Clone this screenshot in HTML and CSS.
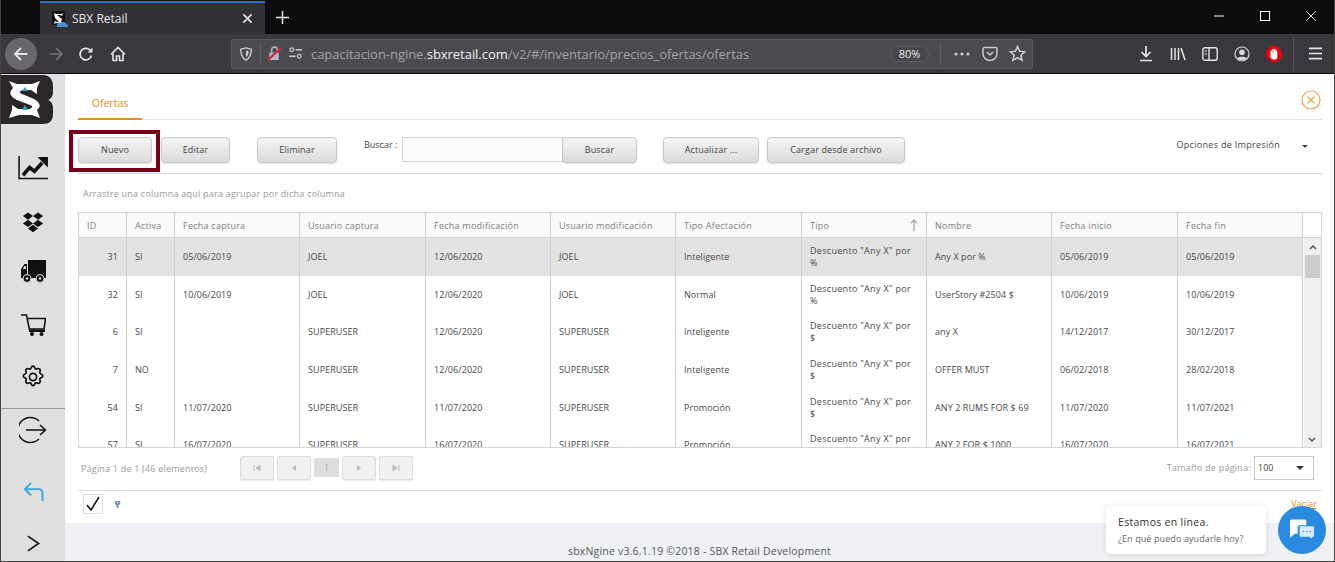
FILE: index.html
```html
<!DOCTYPE html>
<html lang="es">
<head>
<meta charset="utf-8">
<title>SBX Retail</title>
<link rel="stylesheet" href="styles.css">
</head>
<body>
<div class="window">
  <header class="tabbar">
    <div class="tab">
      <svg class="favicon" viewBox="0 0 16 16"><rect width="13" height="14" fill="#111"/><path d="M2 2l2 1h5l2-1-1 3-2-1H5l5 4-1 3 2 1H4l-2 1 1-3 2 1h2L3 7z" fill="#fff"/><path d="M5 14c0-2 2-3 4-2 2-2 5-1 5 1 1 0 2 1 2 3H5z" fill="#4a90d9"/></svg>
      <span class="tab-title">SBX Retail</span>
      <svg class="tab-close" viewBox="0 0 12 12"><path d="M1.500 1.500l9 9M10.500 1.500l-9 9" stroke="#eee" stroke-width="1.600"/></svg>
    </div>
    <svg class="newtab" viewBox="0 0 14 14"><path d="M7 0v14M0 7h14" stroke="#e8e8e8" stroke-width="1.600"/></svg>
    <div class="winctl">
      <svg viewBox="0 0 12 12"><path d="M1 6h10" stroke="#fff"/></svg>
      <svg viewBox="0 0 12 12"><rect x="1.500" y="1.500" width="9" height="9" fill="none" stroke="#fff"/></svg>
      <svg viewBox="0 0 12 12"><path d="M1 1l10 10M11 1L1 11" stroke="#fff" stroke-width=".9"/></svg>
    </div>
  </header>
  <nav class="toolbar">
    <div class="back"><svg viewBox="0 0 16 16"><path d="M14.500 8H2M8 2L2 8l6 6" fill="none" stroke="#e6e6e6" stroke-width="1.800"/></svg></div>
    <svg class="tb-icon forward" viewBox="0 0 16 16"><path d="M1.500 8H14M8 2l6 6-6 6" fill="none" stroke="#77777a" stroke-width="1.600"/></svg>
    <svg class="tb-icon reload" viewBox="0 0 16 16"><path d="M13.500 9.500A5.800 5.800 0 1 1 12 4l1.500 1.500" fill="none" stroke="#e6e6e6" stroke-width="1.700"/><path d="M14.500 1.500v5h-5z" fill="#e6e6e6"/></svg>
    <svg class="tb-icon home" viewBox="0 0 16 16"><path d="M1 8.500L8 1.500l7 7M3 7.500V14.500h3.500V10h3v4.500H13V7.500" fill="none" stroke="#e6e6e6" stroke-width="1.600"/></svg>
    <div class="urlbar">
      <svg class="u-shield" viewBox="0 0 16 16"><path d="M8 1l6 1.500c0 6-1.500 10-6 12.500-4.500-2.500-6-6.500-6-12.500z" fill="none" stroke="#cfcfcf" stroke-width="1.600"/><path d="M8 4l3 .8c0 3-.8 5.200-3 6.800z" fill="#cfcfcf"/></svg>
      <span class="u-sep"></span>
      <svg class="u-lock" viewBox="0 0 16 16"><rect x="2.500" y="7" width="10" height="8" fill="#bbb"/><path d="M5 7V4a3 3 0 0 1 6 0v3" fill="none" stroke="#bbb" stroke-width="1.600"/><path d="M1 15L15 2" stroke="#d3234a" stroke-width="2.200"/></svg>
      <svg class="u-perm" viewBox="0 0 16 14"><circle cx="4" cy="3" r="2" fill="none" stroke="#ccc" stroke-width="1.300"/><path d="M8 3h7M1 10h7" stroke="#ccc" stroke-width="1.500"/><circle cx="12" cy="10" r="2" fill="none" stroke="#ccc" stroke-width="1.300"/></svg>
      <span class="url"><span class="url-dim">capacitacion-ngine.</span><span class="url-host">sbxretail.com</span><span class="url-dim">/v2/#/inventario/precios_ofertas/ofertas</span></span>
      <span class="zoompill">80%</span>
      <span class="u-sep sep2"></span>
      <svg class="u-dots" viewBox="0 0 16 4"><circle cx="2" cy="2" r="1.600" fill="#ccc"/><circle cx="8" cy="2" r="1.600" fill="#ccc"/><circle cx="14" cy="2" r="1.600" fill="#ccc"/></svg>
      <svg class="u-pocket" viewBox="0 0 16 16"><path d="M1 3a1.500 1.500 0 0 1 1.500-1.500h11A1.500 1.500 0 0 1 15 3v4.500a7 7 0 0 1-14 0z" fill="none" stroke="#ccc" stroke-width="1.500"/><path d="M5 6l3 3 3-3" fill="none" stroke="#ccc" stroke-width="1.500"/></svg>
      <svg class="u-star" viewBox="0 0 16 16"><path d="M8 1.500l2 4.400 4.800.5-3.600 3.200 1 4.700L8 12l-4.200 2.300 1-4.700L1.200 6.400 6 5.900z" fill="none" stroke="#ccc" stroke-width="1.500"/></svg>
    </div>
    <svg class="tb-icon dl" viewBox="0 0 16 16"><path d="M8 0v10M3.500 6L8 10.500 12.500 6M2 14.500h12" fill="none" stroke="#e6e6e6" stroke-width="1.700"/></svg>
    <svg class="tb-icon lib" viewBox="0 0 16 16"><path d="M1.500 2v12M5 2v12M8.500 2v12M11 2l4 12" fill="none" stroke="#e6e6e6" stroke-width="1.500"/></svg>
    <svg class="tb-icon side" viewBox="0 0 16 14"><rect x=".8" y=".8" width="14.400" height="12.400" rx="2" fill="none" stroke="#e6e6e6" stroke-width="1.400"/><path d="M7 1v12" stroke="#e6e6e6" stroke-width="1.400"/><path d="M2.500 4H5M2.500 7H5" stroke="#e6e6e6"/></svg>
    <svg class="tb-icon acct" viewBox="0 0 16 16"><circle cx="8" cy="8" r="7" fill="none" stroke="#d8d8d8" stroke-width="1.200"/><circle cx="8" cy="6.200" r="2.800" fill="#d8d8d8"/><path d="M3 12.500c1-2.500 9-2.500 10 0-2 2-8 2-10 0z" fill="#d8d8d8"/></svg>
    <svg class="tb-icon stop" viewBox="0 0 16 16"><path d="M5 0h6l5 5v6l-5 5H5l-5-5V5z" fill="#e3000f"/><path d="M5.200 8V5M7 8V3.500M8.800 8V3.500M10.500 8V5" stroke="#fff" stroke-width="1.500" stroke-linecap="round"/><path d="M4.500 7.500h6.800V11c0 1.500-1 2.500-2.300 2.500H7.200c-.8 0-1.400-.4-1.800-1L3.500 9.800l.8-.6 1 1z" fill="#fff"/></svg>
    <span class="tb-sep"></span>
    <svg class="tb-icon menu" viewBox="0 0 14 14"><path d="M0 1.500h14M0 7h14M0 12.500h14" stroke="#e6e6e6" stroke-width="1.800"/></svg>
  </nav>
  <div class="app">
    <aside class="sidebar">
      <svg class="logo" viewBox="0 0 52 52"><path d="M0 1h42c7 0 10 5 10 11v6c0 4-2 7-5 8 3 1 5 4 5 8v6c0 7-4 10-10 10H0z" fill="#2a2726"/><path d="M8 7l8 3h15l8-3-3 7v6l-6-4H21c-3 2-3 3 0 4l12 5c7 4 7 8 3 11l3 8-8-3H18L8 44l3-8v-5l6 4h12c3-2 3-3 0-4L16 26c-8-4-8-8-4-12z" fill="#fff"/><path d="M24 13l3 4h-6zM24 31l3 5h-6z" fill="#35a5dc"/></svg>
      <svg class="s-icon s-chart" viewBox="0 0 32 26"><path d="M1 1v23.500h30" fill="none" stroke="#111" stroke-width="1.600"/><path d="M5 21l7-8 5 4 8-9" fill="none" stroke="#111" stroke-width="3.800"/><path d="M20 2h11v11z" fill="#111"/></svg>
      <svg class="s-icon s-box" viewBox="0 0 24 22"><path d="M6.500 0L12 4 6.500 8 1 4zM17.500 0L23 4l-5.500 4L12 4zM6.500 8L12 12l-5.500 4L1 12zM17.500 8L23 12l-5.500 4L12 12zM6.500 17.500L12 13.500l5.500 4L12 21.500z" fill="#111"/></svg>
      <svg class="s-icon s-truck" viewBox="0 0 25 23"><path d="M7 0h18v18H7z" fill="#111"/><path d="M6 4H3.500L0 9v9h6zM3.500 6H5v3H1.800z" fill="#111" fill-rule="evenodd"/><circle cx="6" cy="18.500" r="4" fill="#111" stroke="#e0e0de"/><circle cx="6" cy="18.500" r="1.200" fill="#e0e0de"/><circle cx="19" cy="18.500" r="4" fill="#111" stroke="#e0e0de"/><circle cx="19" cy="18.500" r="1.200" fill="#e0e0de"/></svg>
      <svg class="s-icon s-cart" viewBox="0 0 25 22"><path d="M0 1h5.500l3 15M6 4.500h18.500L23 15H8.500" fill="none" stroke="#111" stroke-width="1.600"/><path d="M8 15.500h16v2.500H8z" fill="#111"/><circle cx="11" cy="20" r="2" fill="#111"/><circle cx="20.500" cy="20" r="2" fill="#111"/></svg>
      <svg class="s-icon s-gear" viewBox="0 0 24 24"><path d="M12 1.200c1 0 1.500.5 1.800 1.500.3 1.200 1.300 1.700 2.400 1.100 1-.5 1.800-.4 2.500.3.700.7.800 1.500.3 2.400-.6 1.100-.1 2.100 1.100 2.500 1 .3 1.600.9 1.600 1.900s-.6 1.600-1.600 1.900c-1.200.4-1.700 1.400-1.100 2.500.5.900.4 1.700-.3 2.400-.7.700-1.500.8-2.500.3-1.100-.6-2.100-.1-2.400 1.100-.3 1-.8 1.600-1.800 1.600s-1.500-.6-1.800-1.600c-.3-1.200-1.300-1.700-2.400-1.100-1 .5-1.800.4-2.500-.3-.7-.7-.8-1.500-.3-2.400.6-1.100.1-2.100-1.100-2.500-1-.3-1.600-.9-1.600-1.900s.6-1.600 1.600-1.900c1.200-.4 1.700-1.400 1.100-2.500-.5-.9-.4-1.700.3-2.400.7-.7 1.500-.8 2.500-.3 1.100.6 2.100.1 2.400-1.100.3-1 .8-1.500 1.800-1.500z" fill="none" stroke="#111" stroke-width="1.700"/><circle cx="12" cy="12" r="3.600" fill="none" stroke="#111" stroke-width="1.700"/></svg>
      <div class="s-divider"></div>
      <svg class="s-icon s-exit" viewBox="0 0 28 28"><path d="M20 5A12.500 12.500 0 1 0 20 23" fill="none" stroke="#111" stroke-width="1.500"/><path d="M7 14h19.500M21 9l5.500 5-5.500 5" fill="none" stroke="#111" stroke-width="1.500"/></svg>
      <svg class="s-icon s-back" viewBox="0 0 22 20"><path d="M20.500 20v-8c0-3-1.500-4.500-4.500-4.500H2M8.500 1L2 7.500 8.500 14" fill="none" stroke="#35a5e4" stroke-width="2"/></svg>
      <svg class="s-icon s-next" viewBox="0 0 14 18"><path d="M1 1l11.500 8L1 17" fill="none" stroke="#111" stroke-width="1.800"/></svg>
    </aside>
    <div class="main">
      <main class="content">
        <div class="tabs">
          <span class="tab-active">Ofertas</span>
          <svg class="close-circle" viewBox="0 0 20 20"><circle cx="10" cy="10" r="9" fill="none" stroke="#eda04c" stroke-width="1.200"/><path d="M6.500 6.500l7 7M13.500 6.500l-7 7" stroke="#eda04c" stroke-width="1.200"/></svg>
        </div>
        <div class="actions">
          <button class="btn b-nuevo">Nuevo</button>
          <button class="btn b-editar">Editar</button>
          <button class="btn b-eliminar">Eliminar</button>
          <label class="search-label">Buscar :</label>
          <input class="search-input" type="text">
          <button class="btn b-buscar">Buscar</button>
          <button class="btn b-actualizar">Actualizar ...</button>
          <button class="btn b-cargar">Cargar desde archivo</button>
          <span class="print">Opciones de Impresión</span>
          <span class="print-caret"></span>
          <div class="highlight"></div>
        </div>
        <div class="groupbar">Arrastre una columna aquí para agrupar por dicha columna</div>
        <section class="grid">
          <div class="row head">
            <div>ID</div><div>Activa</div><div>Fecha captura</div><div>Usuario captura</div><div>Fecha modificación</div><div>Usuario modificación</div><div>Tipo Afectación</div>
            <div class="sorted">Tipo<svg class="sort" viewBox="0 0 8 12"><path d="M4 12V1M1 4l3-3 3 3" fill="none" stroke="#aaa" stroke-width="1.300"/></svg></div>
            <div>Nombre</div><div>Fecha inicio</div><div>Fecha fin</div>
          </div>
          <div class="body">
            <div class="rows">
              <div class="row sel"><div class="num">31</div><div>SI</div><div>05/06/2019</div><div>JOEL</div><div>12/06/2020</div><div>JOEL</div><div>Inteligente</div><div class="tipo">Descuento "Any X" por %</div><div>Any X por %</div><div>05/06/2019</div><div>05/06/2019</div></div>
              <div class="row"><div class="num">32</div><div>SI</div><div>10/06/2019</div><div>JOEL</div><div>12/06/2020</div><div>JOEL</div><div>Normal</div><div class="tipo">Descuento "Any X" por %</div><div>UserStory #2504 $</div><div>10/06/2019</div><div>10/06/2019</div></div>
              <div class="row"><div class="num">6</div><div>SI</div><div></div><div>SUPERUSER</div><div>12/06/2020</div><div>SUPERUSER</div><div>Inteligente</div><div class="tipo">Descuento "Any X" por $</div><div>any X</div><div>14/12/2017</div><div>30/12/2017</div></div>
              <div class="row"><div class="num">7</div><div>NO</div><div></div><div>SUPERUSER</div><div>12/06/2020</div><div>SUPERUSER</div><div>Inteligente</div><div class="tipo">Descuento "Any X" por $</div><div>OFFER MUST</div><div>06/02/2018</div><div>28/02/2018</div></div>
              <div class="row"><div class="num">54</div><div>SI</div><div>11/07/2020</div><div>SUPERUSER</div><div>11/07/2020</div><div>SUPERUSER</div><div>Promoción</div><div class="tipo">Descuento "Any X" por $</div><div>ANY 2 RUMS FOR $ 69</div><div>11/07/2020</div><div>11/07/2021</div></div>
              <div class="row"><div class="num">57</div><div>SI</div><div>16/07/2020</div><div>SUPERUSER</div><div>16/07/2020</div><div>SUPERUSER</div><div>Promoción</div><div class="tipo">Descuento "Any X" por $</div><div>ANY 2 FOR $ 1000</div><div>16/07/2020</div><div>16/07/2021</div></div>
            </div>
            <div class="scrollbar">
              <svg class="sb-arrow" viewBox="0 0 8 6"><path d="M1 5l3-3 3 3" fill="none" stroke="#555" stroke-width="1.500"/></svg>
              <div class="sb-thumb"></div>
              <svg class="sb-arrow sb-down" viewBox="0 0 8 6"><path d="M1 1l3 3 3-3" fill="none" stroke="#555" stroke-width="1.500"/></svg>
            </div>
          </div>
        </section>
        <div class="pager">
          <span class="pager-info">Página 1 de 1 (46 elementos)</span>
          <div class="pager-btns">
            <span class="pg"><svg viewBox="0 0 8 8"><path d="M1 1v6M7 1v6L3 4z" stroke="#bbb" fill="#bbb"/></svg></span>
            <span class="pg"><svg viewBox="0 0 8 8"><path d="M6 1v6L2 4z" fill="#bbb"/></svg></span>
            <span class="pg-cur">1</span>
            <span class="pg"><svg viewBox="0 0 8 8"><path d="M2 1v6l4-3z" fill="#bbb"/></svg></span>
            <span class="pg"><svg viewBox="0 0 8 8"><path d="M7 1v6M1 1v6l4-3z" stroke="#bbb" fill="#bbb"/></svg></span>
          </div>
          <span class="size-label">Tamaño de página:</span>
          <div class="size-select"><span>100</span><i class="size-caret"></i></div>
        </div>
        <div class="bottom">
          <span class="check"><svg viewBox="0 0 16 16"><path d="M2 9l4 5 8-13" fill="none" stroke="#111" stroke-width="1.500"/></svg></span>
          <svg class="bulb" viewBox="0 0 8 10"><path d="M1 1h6v3L5 6v3H3V6L1 4z" fill="#6f8fb8"/><circle cx="4" cy="2.500" r="1" fill="#fff"/></svg>
          <a class="vaciar">Vaciar</a>
        </div>
      </main>
      <footer class="footer">sbxNgine v3.6.1.19 ©2018 - SBX Retail Development</footer>
    </div>
  </div>
  <div class="chat">
    <div class="chat-bubble">
      <p class="chat-title">Estamos en línea.</p>
      <p class="chat-sub">¿En qué puedo ayudarle hoy?</p>
    </div>
    <div class="chat-btn"><svg viewBox="0 0 28 24"><path d="M3 1h13a2 2 0 0 1 2 2v11a2 2 0 0 1-2 2H6l-5 4V3a2 2 0 0 1 2-2z" fill="#fff"/><path d="M11 7h14a2 2 0 0 1 2 2v9a2 2 0 0 1-2 2v3l-4-3H11a2 2 0 0 1-2-2V9a2 2 0 0 1 2-2z" fill="#2a8ae0"/><path d="M12 8h13a1 1 0 0 1 1 1v9a1 1 0 0 1-1 1h-1v2l-3-2h-9a1 1 0 0 1-1-1V9a1 1 0 0 1 1-1z" fill="#d9ebfb"/><circle cx="15" cy="13.500" r=".8" fill="#2a8ae0"/><circle cx="18.500" cy="13.500" r=".8" fill="#2a8ae0"/><circle cx="22" cy="13.500" r=".8" fill="#2a8ae0"/></svg></div>
  </div>
</div>
</body>
</html>
```
FILE: styles.css
```css
* { box-sizing: border-box; }
html, body { margin: 0; height: 100%; overflow: hidden; }
body { font-family: "Open Sans", "Liberation Sans", sans-serif; font-size: 9px; color: #444; background: #fff; }
p { margin: 0; }
svg { display: block; flex: none; }

.window { position: relative; width: 1335px; height: 562px; display: flex; flex-direction: column; border: solid #444; border-width: 0 1px 1px; }

/* tab strip */
.tabbar { height: 34px; flex: none; background: #0c0c0e; display: flex; align-items: stretch; padding-left: 39px; }
.tab { width: 225px; margin-top: 1px; background: #323236; border-top: 2px solid #2f6fc0; display: flex; align-items: center; padding-left: 12px; }
.favicon { width: 16px; height: 16px; margin-right: -2px; }
.tab-title { margin-left: 6px; font-size: 12px; color: #e6e6e6; flex: 1; }
.tab-close { width: 11px; height: 11px; margin-right: 12px; }
.newtab { width: 13px; height: 13px; margin: 11px 0 0 11px; }
.winctl { margin-left: auto; display: flex; align-items: center; gap: 34px; padding-right: 17px; padding-bottom: 3px; }
.winctl svg { width: 12px; height: 12px; }

/* toolbar */
.toolbar { height: 40px; flex: none; background: #38383d; border-bottom: 1px solid #0c0c0e; display: flex; align-items: center; }
.back { width: 32px; height: 32px; margin-left: 4px; border-radius: 50%; background: #68686c; display: flex; align-items: center; justify-content: center; }
.back svg { width: 16px; height: 16px; }
.tb-icon { width: 16px; height: 16px; }
.forward { margin-left: 11px; }
.reload { margin-left: 14px; }
.home { margin-left: 16px; }
.urlbar { width: 802px; height: 30px; margin-left: 105px; background: #4a4a4f; border: 1px solid #5c5c60; border-radius: 2px; display: flex; align-items: center; }
.u-shield { width: 14px; height: 14px; margin-left: 7px; }
.u-sep { width: 1px; height: 22px; background: #626266; margin-left: 7px; }
.u-lock { width: 15px; height: 15px; margin-left: 6px; }
.u-perm { width: 15px; height: 13px; margin-left: 6px; }
.url { margin-left: 8px; font-size: 13px; letter-spacing: -.04px; white-space: nowrap; flex: 1; }
.url-dim { color: #a4a4a6; }
.url-host { color: #f2f2f2; }
.zoompill { width: 39px; height: 16px; border-radius: 8px; background: #45454a; border: 1px solid #5a5a5e; color: #e8e8e8; font-size: 11px; line-height: 14px; text-align: center; }
.sep2 { margin-left: 11px; }
.u-dots { width: 16px; height: 4px; margin-left: 13px; }
.u-pocket { width: 16px; height: 16px; margin-left: 12px; }
.u-star { width: 17px; height: 17px; margin-left: 11px; margin-right: 6px; }
.dl { margin-left: 105px; }
.lib { margin-left: 16px; }
.side { margin-left: 16px; height: 14px; }
.acct { margin-left: 16px; }
.stop { margin-left: 16px; }
.tb-sep { width: 1px; height: 34px; background: #56565a; margin-left: 11px; }
.menu { width: 13px; height: 13px; margin-left: 15px; }

/* app */
.app { flex: 1; display: flex; min-height: 0; }
.sidebar { width: 64px; flex: none; background: #e0e0de; display: flex; flex-direction: column; align-items: center; }
.logo { width: 52px; height: 52px; align-self: flex-start; }
.s-icon { flex: none; }
.s-chart { width: 31px; height: 25px; margin-top: 29px; }
.s-box { width: 22px; height: 21px; margin-top: 32px; }
.s-truck { width: 25px; height: 23px; margin-top: 27px; }
.s-cart { width: 25px; height: 22px; margin-top: 31px; }
.s-gear { width: 24px; height: 24px; margin-top: 29px; }
.s-divider { width: 64px; height: 1px; background: #9a9a9a; margin-top: 19px; }
.s-exit { width: 28px; height: 28px; margin-top: 7px; }
.s-back { width: 21px; height: 19px; margin-top: 38px; }
.s-next { width: 13px; height: 17px; margin-top: 34px; }

.main { flex: 1; min-width: 0; display: flex; flex-direction: column; }
.content { height: 449px; flex: none; padding: 0 12px 0 13px; background: #fff; }
.footer { flex: 1; background: #f0f1f5; text-align: center; padding-top: 21px; font-size: 10.500px; color: #555; letter-spacing: .2px; }

/* tabs */
.tabs { height: 46px; border-bottom: 1px solid #e4e4e4; display: flex; justify-content: space-between; align-items: flex-start; }
.tab-active { width: 64px; height: 46px; border-bottom: 2px solid #ef8b1c; color: #ef8b1c; text-align: center; font-size: 10.500px; padding-top: 22px; }
.close-circle { width: 20px; height: 20px; margin: 16px 1px 0 0; }

/* actions */
.actions { position: relative; height: 54px; border-bottom: 1px solid #d9d9d9; display: flex; align-items: flex-start; padding-top: 17px; }
.btn { height: 26px; padding: 0 0 2px; font: inherit; letter-spacing: .15px; color: #444; border: 1px solid #c8c8c8; border-radius: 4px; background: linear-gradient(#f4f4f4, #dcdcdc); box-shadow: 0 1px 1px rgba(0,0,0,.12); }
.b-nuevo { width: 74px; }
.b-editar { width: 69px; margin-left: 9px; }
.b-eliminar { width: 80px; margin-left: 27px; }
.search-label { width: 38px; margin-left: 27px; line-height: 14px; padding-top: 1px; }
.search-input { width: 161px; height: 25px; border: 1px solid #d4d4d4; background: #fcfcfc; padding: 0; }
.b-buscar { width: 75px; margin-left: -1px; }
.b-actualizar { width: 96px; margin-left: 26px; }
.b-cargar { width: 138px; margin-left: 8px; }
.print { margin-left: auto; margin-right: 22px; padding-top: 1px; line-height: 14px; color: #444; letter-spacing: .3px; }
.print-caret { width: 0; height: 0; border: 3px solid transparent; border-top-color: #444; border-bottom: 0; margin: 8px 14px 0 0; }
.highlight { position: absolute; left: -9px; top: 10px; width: 91px; height: 42px; border: 4px solid #7a0019; pointer-events: none; }

.groupbar { height: 38px; padding: 13px 0 0 5px; line-height: 14px; color: #9a9a9a; letter-spacing: .22px; }

/* grid */
.grid { height: 236px; border: 1px solid #d4d4d4; overflow: hidden; }
.row { display: grid; grid-template-columns: 48px 48px 125px 126px 125px 125px 126px 125px 125px 126px 125px; height: 37.6px; }
.row > div { border-right: 1px solid #d0d0d0; padding: 1px 8px 0; display: flex; align-items: center; color: #484848; line-height: 12px; letter-spacing: .08px; }
.row > .tipo { padding-right: 10px; letter-spacing: .3px; }
.grid .head { height: 25px; border-bottom: 1px solid #d4d4d4; background: linear-gradient(90deg, #fafafa 1223px, #fff 1223px); }
.row.head > div { color: #808080; letter-spacing: .25px; }
.sorted { position: relative; }
.sort { position: absolute; right: 8px; top: 6px; width: 8px; height: 12px; }
.body { display: flex; height: 210px; }
.rows { width: 1224px; flex: none; overflow: hidden; }
.sel { background: #e3e3e3; }
.row > .num { justify-content: flex-end; }
.scrollbar { width: 17px; margin-left: 1px; background: #f0f0f0; position: relative; display: flex; flex-direction: column; align-items: center; }
.sb-arrow { width: 8px; height: 6px; margin-top: 6px; }
.sb-thumb { width: 15px; height: 23px; background: #cdcdcd; margin-top: 5px; }
.sb-down { position: absolute; bottom: 5px; left: 4px; }

/* pager */
.pager { height: 43px; border-bottom: 1px solid #dedede; display: flex; align-items: center; padding: 0 0 3px 3px; }
.pager-info { width: 159px; padding-top: 2px; color: #9a9a9a; letter-spacing: .2px; }
.pager-btns { display: flex; gap: 3px; align-items: center; }
.pg { width: 34px; height: 24px; border: 1px solid #ddd; border-radius: 2px; background: #f1f1f1; box-shadow: 0 1px 1px rgba(0,0,0,.08); display: flex; align-items: center; justify-content: center; }
.pg svg { width: 8px; height: 8px; }
.pg-cur { width: 25px; height: 19px; background: #dedede; color: #aaa; text-align: center; line-height: 19px; }
.size-label { margin-left: auto; color: #9a9a9a; letter-spacing: .25px; }
.size-select { width: 60px; height: 24px; margin: 0 8px 0 3px; border: 1px solid #ccc; display: flex; align-items: center; justify-content: space-between; padding: 0 9px 0 3px; color: #444; }
.size-caret { width: 0; height: 0; border: 4px solid transparent; border-top-color: #333; border-bottom: 0; }

.bottom { height: 33px; display: flex; align-items: flex-start; padding: 3px 5px 0; }
.check { width: 20px; height: 20px; border: 1px solid #ddd; display: flex; align-items: center; justify-content: center; }
.check svg { width: 16px; height: 16px; }
.bulb { width: 7px; height: 9px; margin: 6px 0 0 11px; }
.vaciar { margin-left: auto; margin-top: 4px; color: #ef8b1c; text-decoration: underline; line-height: 12px; }

/* chat */
.chat { position: absolute; left: 1105px; top: 506px; display: flex; align-items: center; }
.chat-bubble { width: 160px; height: 48px; background: #fff; border-radius: 4px; box-shadow: 0 1px 6px rgba(0,0,0,.12); padding: 8px 12px; }
.chat-title { font-size: 10.500px; color: #333; letter-spacing: .3px; line-height: 16px; }
.chat-sub { color: #666; line-height: 14px; margin-top: 2px; letter-spacing: .1px; }
.chat-btn { width: 48px; height: 48px; margin-left: 12px; border-radius: 50%; background: #2a8ae0; display: flex; align-items: center; justify-content: center; }
.chat-btn svg { width: 27px; height: 24px; }
```
